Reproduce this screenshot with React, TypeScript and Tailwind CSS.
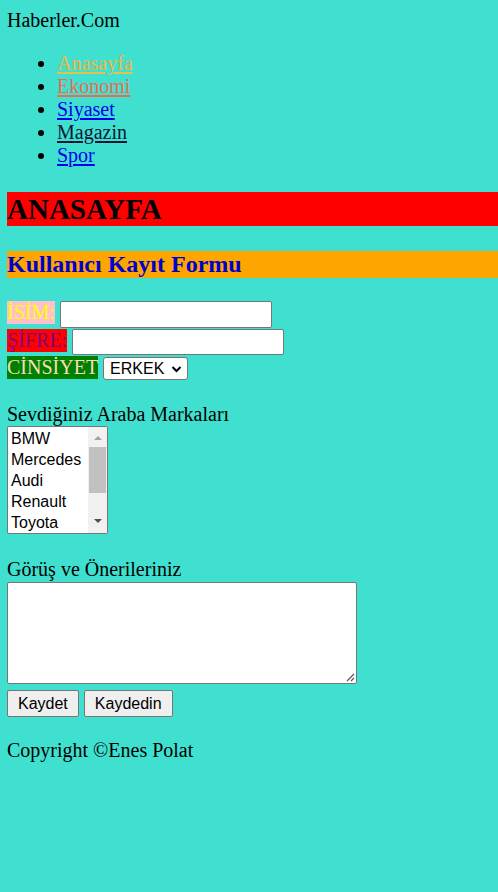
const menu = [
  { label: "Anasayfa", cls: "text-[#f0b43c] decoration-[#e8c04a]" },
  { label: "Ekonomi", cls: "text-[#f26a4e] decoration-[#f26a4e]" },
  { label: "Siyaset", cls: "text-[#0000ee] decoration-[#0000ee]" },
  { label: "Magazin", cls: "text-[#0c1535] decoration-[#0c1535]" },
  { label: "Spor", cls: "text-[#0000ee] decoration-[#0000ee]" },
];

const cars = ["BMW", "Mercedes", "Audi", "Renault", "Toyota"];

export default function App() {
  return (
    <div className="min-h-[892px] bg-[#40e0d0] pl-[7px] pt-[9px] font-['Liberation_Serif',serif] text-[20px] leading-[23px] text-black">
      <div>Haberler.Com</div>

      {/* Menu */}
      <ul className="mt-5 list-disc pl-[50px]">
        {menu.map((m) => (
          <li key={m.label}>
            <a href="#" className={"underline underline-offset-2 " + m.cls}>
              {m.label}
            </a>
          </li>
        ))}
      </ul>

      <h1 className="mt-[25px] bg-[#ff0000] text-[29px] font-bold leading-[34px]">ANASAYFA</h1>
      <h2 className="mt-[25px] bg-[#ffa500] text-[24px] font-bold leading-[27px] text-[#0000cd]">
        Kullanıcı Kayıt Formu
      </h2>

      {/* Form rows */}
      <div className="mt-[23px] flex h-[28px] items-start">
        <span className="bg-[#ffc0cb] leading-[23px] text-[#ffff00]">İSİM:</span>
        <input
          type="text"
          className="ml-[5px] h-[27px] w-[212px] rounded-[2px] border border-[#767676] bg-white"
        />
      </div>
      <div className="flex h-[27px] items-start">
        <span className="bg-[#ff0000] leading-[23px] text-[#800080]">ŞİFRE:</span>
        <input
          type="password"
          className="ml-[5px] h-[26px] w-[212px] rounded-[2px] border border-[#767676] bg-white"
        />
      </div>
      <div className="flex h-[24px] items-start">
        <span className="bg-[#008000] leading-[23px] text-[#f5deb3]">CİNSİYET</span>
        <div className="ml-[5px] mt-[1px] flex h-[23px] w-[85px] items-center justify-between rounded-[3px] border border-[#767676] bg-white pl-[6px] pr-[5px] font-['Liberation_Sans',sans-serif] text-[16px]">
          <span>ERKEK</span>
          <svg width="11" height="8" viewBox="0 0 11 8" aria-hidden="true">
            <path d="M1.5 2 L5.5 6 L9.5 2" fill="none" stroke="#000" strokeWidth="2" />
          </svg>
        </div>
      </div>

      {/* Cars */}
      <div className="mt-[23px]">Sevdiğiniz Araba Markaları</div>
      <div className="flex h-[108px] w-[101px] overflow-hidden rounded-[2px] border border-[#767676] bg-white font-['Liberation_Sans',sans-serif] text-[16px] leading-[21px]">
        <div className="flex-1 pl-[3px] pt-[1px]">
          {cars.map((c) => (
            <div key={c}>{c}</div>
          ))}
        </div>
        <div className="flex w-[19px] flex-col items-center bg-[#f1f1f1]">
          <svg width="10" height="16" viewBox="0 0 10 16" className="mt-[2px]" aria-hidden="true">
            <path d="M1 11 L5 7 L9 11 Z" fill="#a3a3a3" />
          </svg>
          <div className="mt-[2px] h-[46px] w-[17px] bg-[#c1c1c1]" />
          <div className="flex-1" />
          <svg width="10" height="16" viewBox="0 0 10 16" className="mb-[4px]" aria-hidden="true">
            <path d="M1 6 L5 10 L9 6 Z" fill="#505050" />
          </svg>
        </div>
      </div>

      {/* Comments */}
      <div className="mt-[24px]">Görüş ve Önerileriniz</div>
      <div className="relative mt-[1px] h-[102px] w-[350px] rounded-[2px] border border-[#767676] bg-white">
        <svg width="10" height="10" viewBox="0 0 10 10" className="absolute bottom-[1px] right-[1px]" aria-hidden="true">
          <path d="M9 2 L2 9 M9 6 L6 9" stroke="#555" strokeWidth="1.2" />
        </svg>
      </div>

      <div className="mt-[6px] flex gap-[5px] font-['Liberation_Sans',sans-serif] text-[16px]">
        <button className="h-[27px] rounded-[2px] border border-[#767676] bg-[#efefef] px-[10px]">Kaydet</button>
        <button className="h-[27px] rounded-[2px] border border-[#767676] bg-[#efefef] px-[10px]">Kaydedin</button>
      </div>

      <div className="mt-[22px]">Copyright ©Enes Polat</div>
    </div>
  );
}
